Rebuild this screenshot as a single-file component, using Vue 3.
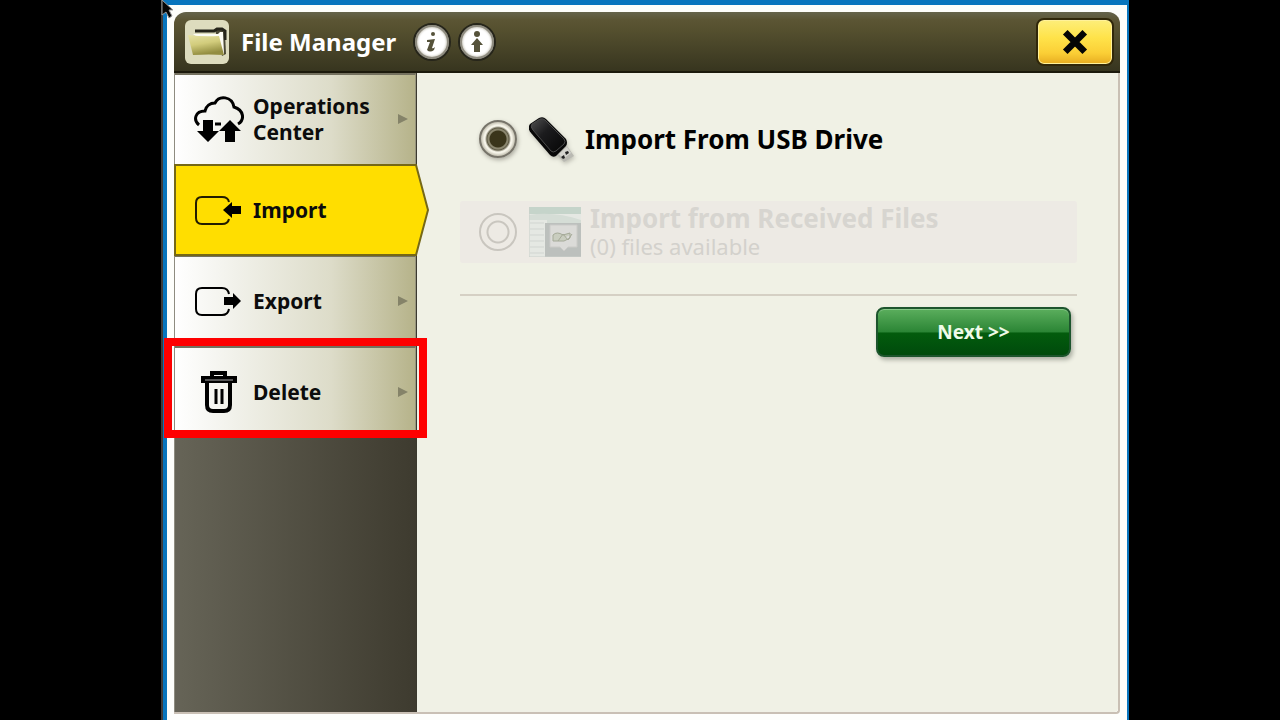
<script setup>
import { ref } from 'vue'

const tabs = [
    { id: 'operations', label: 'Operations Center' },
    { id: 'import', label: 'Import' },
    { id: 'export', label: 'Export' },
    { id: 'delete', label: 'Delete', highlighted: true },
]

const activeTab = ref('import')
const source = ref('usb')
const receivedFiles = ref(0)
</script>

<template>
    <div class="screen">
        <div class="frame">
            <div class="window">
                <header class="title-bar">
                    <svg class="folder-icon" viewBox="0 0 44 44" aria-hidden="true">
                        <defs>
                            <linearGradient id="folder" x1="0" y1="0" x2="0.3" y2="1">
                                <stop offset="0" stop-color="#e6e2a4" />
                                <stop offset="0.5" stop-color="#d2cc7c" />
                                <stop offset="1" stop-color="#928d40" />
                            </linearGradient>
                        </defs>
                        <rect width="44" height="44" rx="6" fill="#dddcbe" />
                        <path d="M30 10H37L40 13L41 34L37 36Z" fill="#4c4a36" />
                        <path d="M10 11H29L32 9H37L40 11V20" fill="none" stroke="#25241a" stroke-width="3" />
                        <path d="M8 14H33L35 12H38L39 34L36 35Z" fill="#fcfcf4" />
                        <path d="M3 15Q18 17 34 16L39 35Q24 34 8 35Z" fill="url(#folder)" />
                    </svg>
                    <h1>File Manager</h1>
                    <button class="round-button" aria-label="Information">
                        <svg viewBox="0 0 28 28">
                            <circle cx="15" cy="6" r="2" />
                            <path d="M9 12L17 11L14 20Q15 21 17 19L16 22Q12 25 9 22L12 14L9 14Z" />
                        </svg>
                    </button>
                    <button class="round-button" aria-label="Show more">
                        <svg viewBox="0 0 28 28">
                            <circle cx="14" cy="6" r="3" />
                            <path d="M14 10L20 17H17V24H11V17H8Z" />
                        </svg>
                    </button>
                    <button class="close-button" aria-label="Close">
                        <svg viewBox="0 0 24 24">
                            <path d="M3 3L21 21M21 3L3 21" />
                        </svg>
                    </button>
                </header>

                <div class="body">
                    <nav class="sidebar">
                        <button
                            v-for="tab in tabs"
                            :key="tab.id"
                            class="tab"
                            :class="{ active: tab.id === activeTab, highlighted: tab.highlighted }"
                            @click="activeTab = tab.id"
                        >
                            <svg v-if="tab.id === activeTab" class="tab-shape" viewBox="0 0 256 92" aria-hidden="true">
                                <path d="M1 1H242L254 46L242 91H1Z" />
                            </svg>
                            <!-- cloud with two transfer arrows -->
                            <svg v-if="tab.id === 'operations'" class="tab-icon" viewBox="0 0 52 48">
                                <path
                                    d="M6 30C0 25 2 16 12 16C13 11 17 8 22 8C26 0 39 1 41 12C51 15 52 25 45 29M22 29H28"
                                    fill="none"
                                    stroke="#000"
                                    stroke-width="3"
                                />
                                <path d="M10 25H20V36H26L15 47L4 36H10ZM37 25L48 36H42V47H32V36H26Z" />
                            </svg>
                            <svg v-else-if="tab.id === 'import'" class="tab-icon" viewBox="0 0 52 48">
                                <path
                                    d="M36 16Q35 11 29 11H9Q3 11 3 17V32Q3 38 9 38H29Q35 38 36 33"
                                    fill="none"
                                    stroke="#221c00"
                                    stroke-width="2"
                                />
                                <path d="M30 24L39 16V20H48V28H39V32Z" />
                            </svg>
                            <svg v-else-if="tab.id === 'export'" class="tab-icon" viewBox="0 0 52 48">
                                <path
                                    d="M36 17Q35 11 29 11H9Q3 11 3 17V32Q3 38 9 38H29Q35 38 36 32"
                                    fill="none"
                                    stroke="#000"
                                    stroke-width="2"
                                />
                                <path d="M31 20H40V16L48 24L40 32V28H31Z" />
                            </svg>
                            <svg v-else class="tab-icon" viewBox="0 0 52 48">
                                <path
                                    d="M19 8V5H32V8M10 10H42V13H10ZM14 15V37Q14 43 20 43H31Q37 43 37 37V15"
                                    fill="none"
                                    stroke="#000"
                                    stroke-width="4"
                                />
                                <path d="M23 21V36M29 21V36" stroke="#000" stroke-width="3" />
                                <path d="M12 12H40" stroke="#aaa" stroke-width="1" />
                            </svg>
                            <span class="tab-label">{{ tab.label }}</span>
                            <svg v-if="tab.id !== activeTab" class="tab-arrow" viewBox="0 0 10 10">
                                <path d="M0 0L10 5L0 10Z" />
                            </svg>
                        </button>
                    </nav>

                    <main class="content">
                        <label class="option" for="source-usb">
                            <input id="source-usb" v-model="source" type="radio" name="source" value="usb" />
                            <svg class="usb-icon" viewBox="0 0 47 48" aria-hidden="true">
                                <defs>
                                    <linearGradient id="usb" x1="0" y1="0" x2="1" y2="1">
                                        <stop offset="0" stop-color="#505050" />
                                        <stop offset="0.4" stop-color="#1c1c1e" />
                                        <stop offset="1" stop-color="#050505" />
                                    </linearGradient>
                                </defs>
                                <path d="M28 40L38 31L45 41L35 47Z" fill="#b9b9b2" />
                                <path d="M30 39L38 32L42 38L34 44Z" fill="#d5d5cf" />
                                <path d="M36 37L39 36L40 38L37 40ZM32 42L35 40L36 43L34 44Z" fill="#222" />
                                <path d="M1 9L10 3Q14 1 17 4L37 24Q39 28 37 31L27 41Q24 43 21 40L2 18Q-2 13 1 9Z" fill="#080808" />
                                <path d="M3 9L11 4Q14 3 16 5L35 24Q37 27 35 29L27 36Q24 38 22 36L4 15Q1 12 3 9Z" fill="url(#usb)" stroke="#4b4b4b" />
                            </svg>
                            <span class="option-title">Import From USB Drive</span>
                        </label>

                        <label class="option disabled" for="source-received">
                            <input
                                id="source-received"
                                v-model="source"
                                type="radio"
                                name="source"
                                value="received"
                                :disabled="receivedFiles === 0"
                            />
                            <svg class="files-icon" viewBox="0 0 52 50" aria-hidden="true">
                                <path d="M0 0H52V50H0Z" fill="#e5e8e3" />
                                <path d="M0 0H52V7H0Z" fill="#c5d4ca" />
                                <path d="M0 8Q25 4 52 13V17H18V13H0Z" fill="#d5ddd6" />
                                <path d="M1 16H15M1 22H15M1 28H15M1 34H15M1 40H15M1 46H15" stroke="#d1d5d1" />
                                <path d="M16 16H52V50H16Z" fill="#bcc0bd" />
                                <path d="M21 18H48V40H39L35 44L31 40H21Z" fill="#dbdbd8" stroke="#cbcbc8" />
                                <path d="M24 28Q28 24 34 28L41 26V31L35 34H24ZM29 34L34 27L39 33L43 27" fill="#c9cdbf" stroke="#a5aa98" />
                                <path d="M0 0V50H52" fill="none" stroke="#cbd0ca" />
                            </svg>
                            <span class="option-text">
                                <span class="option-title">Import from Received Files</span>
                                <span class="option-note">({{ receivedFiles }}) files available</span>
                            </span>
                        </label>

                        <div class="actions">
                            <button class="next-button">Next &gt;&gt;</button>
                        </div>
                    </main>
                </div>
            </div>
        </div>
        <svg class="cursor" viewBox="0 0 14 20" aria-hidden="true">
            <path d="M1 0L12 10H8L11 16L8 18L5 12L1 15Z" />
        </svg>
    </div>
</template>

<style>
body {
    background: #000;
}
</style>

<style scoped>
.screen {
    position: relative;
    box-sizing: border-box;
    min-height: 100vh;
    padding: 0 151px 0 161px;
    display: flex;
    overflow: hidden;
    font-family: 'Noto Sans', 'Open Sans', sans-serif;
    color: #0c0c0c;
}

button {
    font-family: inherit;
    color: inherit;
    cursor: pointer;
}

.frame {
    flex: 1;
    display: flex;
    box-sizing: border-box;
    padding: 7px 7px 6px;
    background: #fdfefb;
    border: solid #0875bd;
    border-width: 5px 2px 0 4px;
    margin-left: 2px;
    outline: 2px solid #3c3c3c;
    clip-path: inset(0 0 0 -2px);
}

.window {
    flex: 1;
    display: flex;
    flex-direction: column;
    border: solid #c9c0b4;
    border-width: 0 2px 2px 0;
    border-radius: 12px 12px 4px 0;
}

.title-bar {
    display: flex;
    align-items: center;
    box-sizing: border-box;
    height: 61px;
    padding: 0 6px 0 11px;
    border-radius: 12px 12px 0 0;
    border-bottom: 2px solid #1c1a0c;
    background: linear-gradient(#65644c, #5b5534 14%, #55502f 30%, #37351f);
    margin-right: -2px;
}

.folder-icon {
    width: 44px;
    height: 44px;
    margin-right: 12px;
}

h1 {
    margin: 0 17px 0 0;
    font-size: 24px;
    line-height: 32px;
    font-weight: 700;
    color: #fff;
}

.round-button {
    width: 38px;
    height: 38px;
    box-sizing: border-box;
    padding: 3px;
    margin-right: 7px;
    border: 2px solid #26251a;
    border-radius: 50%;
    background: #fff;
    box-shadow: inset 0 0 0 2px #8f8c80, inset 0 0 2px 3px #d0cec4;
}

.round-button svg {
    display: block;
    width: 28px;
    height: 28px;
    fill: #55523a;
}

.close-button {
    width: 78px;
    height: 48px;
    margin-left: auto;
    padding: 0;
    display: flex;
    align-items: center;
    justify-content: center;
    border: 2px solid #30270a;
    border-radius: 8px;
    background: linear-gradient(#fdee7a, #ffe34a 40%, #fbcf36 75%, #e7ac20);
    box-shadow: inset 0 0 0 1px #fff19a;
}

.close-button svg {
    width: 26px;
    height: 26px;
    stroke: #050505;
    stroke-width: 6;
}

.body {
    flex: 1;
    display: flex;
}

.sidebar {
    width: 243px;
    box-sizing: border-box;
    border-left: 1px solid #8e8c80;
    border-right: 1px solid #3b392e;
    background: linear-gradient(90deg, #666457, #3e3b2f);
}

.tab {
    position: relative;
    display: flex;
    align-items: center;
    box-sizing: border-box;
    width: 100%;
    height: 91px;
    padding: 0 7px 2px 18px;
    border: 0;
    border-top: 2px solid #74715f;
    border-right: 1px solid #98957e;
    background: linear-gradient(90deg, #fff, #f1f1ea 25%, #dddcc9 65%, #b6b38a);
    text-align: left;
}

.tab.active {
    z-index: 1;
    border-color: transparent;
    background: #ffde00;
}

.tab-shape {
    position: absolute;
    top: -2px;
    left: -1px;
    width: 256px;
    height: 92px;
    fill: #ffde00;
    stroke: #756817;
    stroke-width: 2;
}

.tab-icon {
    position: relative;
    width: 52px;
    height: 48px;
    margin-right: 8px;
    flex: none;
}

.tab-label {
    position: relative;
    flex: 1;
    font-size: 21px;
    line-height: 26px;
    font-weight: 700;
}

.tab-arrow {
    width: 10px;
    height: 10px;
    fill: #858369;
}

/* red callout around the tab */
.tab.highlighted::after {
    content: '';
    position: absolute;
    z-index: 2;
    inset: -10px -12px -1px -11px;
    border: 8px solid #fe0000;
}

.content {
    flex: 1;
    padding: 35px 41px 0 43px;
    background: #f0f1e5;
    border-radius: 0 0 4px 0;
}

.option {
    display: flex;
    align-items: center;
    height: 62px;
    margin-bottom: 31px;
    padding-left: 19px;
    border-radius: 3px;
}

.option input {
    appearance: none;
    flex: none;
    width: 38px;
    height: 38px;
    margin: 0 12px 0 0;
    border: 2px solid #77746a;
    border-radius: 50%;
    background: radial-gradient(circle, #3a351b 0 8px, #8b8770 9px 10px, #5d5944 11px, #f5f3e8 13px 14px, #c2bfb0 17px);
    box-shadow: 1px 2px 4px #aaa99e;
}

.option input:disabled {
    border-color: #c9c6bf;
    background: radial-gradient(circle, #edeae4 0 9px, #c9c6bf 10px 11px, #edeae4 12px);
    box-shadow: none;
}

.usb-icon {
    width: 47px;
    height: 48px;
    margin-right: 9px;
    filter: drop-shadow(1px 2px 2px #bbbbb0);
}

.files-icon {
    width: 52px;
    height: 50px;
    margin-right: 9px;
}

.option-title {
    font-size: 26px;
    line-height: 28px;
    font-weight: 700;
    color: #000;
}

.disabled {
    background: #edeae4;
}

.option-text {
    display: flex;
    flex-direction: column;
}

.disabled .option-title {
    color: #d7d5d0;
}

.option-note {
    font-size: 22px;
    line-height: 28px;
    color: #d3d1cc;
}

.actions {
    display: flex;
    justify-content: flex-end;
    padding: 11px 6px 0 0;
    border-top: 2px solid #d5d0c4;
}

.next-button {
    width: 195px;
    height: 50px;
    border: 2px solid #1d552d;
    border-radius: 8px;
    background: linear-gradient(#5bae5d, #2b8535 50%, #035c0d 52%, #004a0c);
    box-shadow: 2px 3px 4px #aeb1a5, inset 0 1px #88c88a;
    font-size: 19px;
    line-height: 28px;
    font-weight: 700;
    color: #effbe9;
}

.cursor {
    position: absolute;
    top: 0;
    left: 161px;
    width: 14px;
    height: 20px;
    fill: #050505;
    stroke: #999;
}
</style>
